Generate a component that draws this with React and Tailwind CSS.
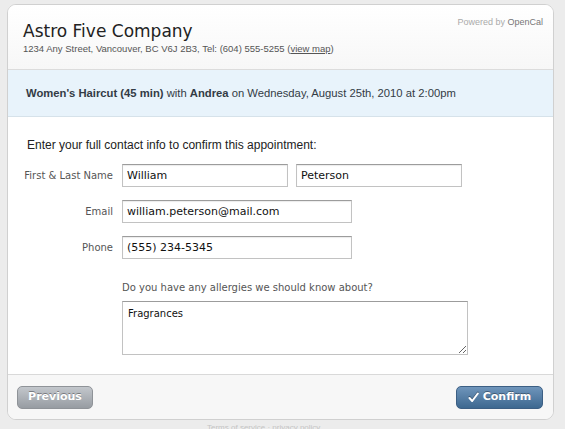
import React from 'react'

function Field({ label, children }) {
  return (
    <div className="flex items-center">
      <label className="w-[107px] pr-[9px] text-right text-[10px] text-[#555]">{label}</label>
      {children}
    </div>
  )
}

export default function App() {
  const input = "h-[23px] border border-[#c2c2c2] border-t-[#9c9c9c] bg-white px-[4px] text-[11px] text-[#111] shadow-[inset_0_1px_1px_rgba(0,0,0,0.08)] outline-none"
  return (
    <div className="h-[429px] w-[565px] overflow-hidden bg-[#ececec] pl-[7px] pt-[4px] font-['DejaVu_Sans',sans-serif]">
      <div className="w-[547px] overflow-hidden rounded-[9px] border border-[#d0d0d0] bg-white">
        <div className="relative h-[65px] border-b border-[#dcdcdc] bg-gradient-to-b from-white to-[#f7f7f7] px-[15px] pt-[16px]">
          <h1 className="text-[17px] leading-[20px] text-[#222]">Astro Five Company</h1>
          <p className="mt-[2px] font-['Liberation_Sans',sans-serif] text-[9.5px] leading-[12px] text-[#555]">
            1234 Any Street, Vancouver, BC V6J 2B3, Tel: (604) 555-5255 (<span className="underline">view map</span>)
          </p>
          <div className="absolute right-[10px] top-[11px] font-['Liberation_Sans',sans-serif] text-[9px] text-[#aaa]">
            Powered by <span className="text-[#777]">OpenCal</span>
          </div>
        </div>
        <div className="flex h-[47px] items-center border-b border-[#d6e2ea] bg-[#e8f3fb] px-[18px] font-['Liberation_Sans',sans-serif] text-[11.25px] text-[#333b45]">
          <span><b>Women's Haircut (45 min)</b> with <b>Andrea</b> on Wednesday, August 25th, 2010 at 2:00pm</span>
        </div>
        <div className="h-[257px] px-[19px] pt-[20px]">
          <p className="font-['Liberation_Sans',sans-serif] text-[12px] leading-[16px] text-[#222]">Enter your full contact info to confirm this appointment:</p>
          <div className="mt-[11px] flex flex-col gap-[13px] -ml-[12px]">
            <Field label="First & Last Name">
              <input className={input + " w-[166px]"} defaultValue="William" />
              <input className={input + " ml-[8px] w-[166px]"} defaultValue="Peterson" />
            </Field>
            <Field label="Email">
              <input className={input + " w-[230px]"} defaultValue="william.peterson@mail.com" />
            </Field>
            <Field label="Phone">
              <input className={input + " w-[230px]"} defaultValue="(555) 234-5345" />
            </Field>
          </div>
          <div className="ml-[95px] mt-[23px]">
            <p className="text-[10px] leading-[12px] text-[#555]">Do you have any allergies we should know about?</p>
            <textarea className="mt-[7px] block h-[54px] w-[346px] resize-y border border-[#c2c2c2] border-t-[#9c9c9c] bg-white px-[5px] py-[4px] text-[10px] text-[#111] outline-none" defaultValue="Fragrances" />
          </div>
        </div>
        <div className="flex h-[45px] items-center justify-between border-t border-[#d9d9d9] bg-[#f7f7f7] px-[9px]">
          <button className="h-[23px] w-[76px] rounded-[5px] border border-[#8f9398] bg-gradient-to-b from-[#c3c7cc] to-[#979ca2] text-[11px] font-bold text-white [text-shadow:0_-1px_0_rgba(0,0,0,0.35)]">
            Previous
          </button>
          <button className="mr-[1px] flex h-[23px] w-[87px] items-center justify-center gap-[4px] rounded-[5px] border border-[#3c5f84] bg-gradient-to-b from-[#6f95bb] to-[#3d6890] text-[11px] font-bold text-white [text-shadow:0_-1px_0_rgba(0,0,0,0.35)]">
            <svg width="11" height="11" viewBox="0 0 11 11" className="drop-shadow-[0_-1px_0_rgba(0,0,0,0.35)]">
              <path d="M1.5 6 L4.2 9 L9.8 1.5" fill="none" stroke="white" strokeWidth="2" strokeLinecap="round" strokeLinejoin="round" />
            </svg>
            <span>Confirm</span>
          </button>
        </div>
      </div>
      <p className="mt-[3px] pl-[200px] font-['Liberation_Sans',sans-serif] text-[8px] leading-[10px] text-[#c4c4c4]">Terms of service · privacy policy</p>
    </div>
  )
}
